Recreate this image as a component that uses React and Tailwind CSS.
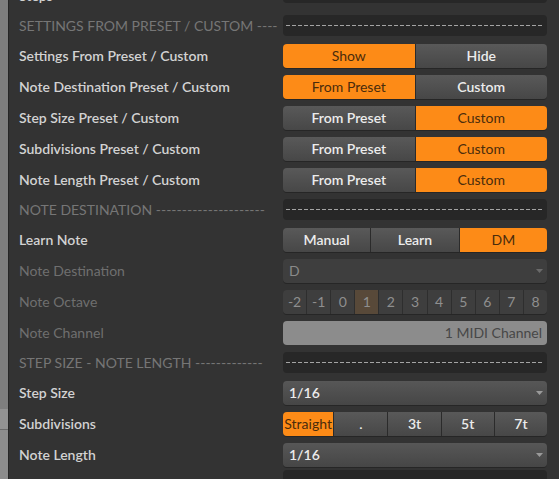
import React from 'react';

// Inspector panel from a step sequencer device

const btnGray = 'bg-gradient-to-b from-[#595959] to-[#474747] text-[#ececec] font-semibold';
const btnOrange = 'bg-[#fd8b17] text-[#4a2c0c]';

function Segmented({ items, active }) {
  return (
    <div className="flex h-[24px] w-full overflow-hidden rounded-[4px] shadow-[0_1px_0_#262626]">
      {items.map((item, i) => (
        <div
          key={item.label}
          className={`flex items-center justify-center ${i > 0 ? 'border-l border-[#2b2b2b]' : ''} ${
            i === active ? btnOrange : btnGray
          }`}
          style={{ flex: item.flex || 1 }}
        >
          {item.label}
        </div>
      ))}
    </div>
  );
}

function Dashes() {
  return (
    <div className="flex h-[21px] w-full items-center rounded-[4px] bg-[#272727] px-[3px]">
      <div className="h-px w-full bg-[repeating-linear-gradient(90deg,#a4a4a4_0_4px,transparent_4px_6px)]" />
    </div>
  );
}

function Arrow({ color }) {
  return (
    <svg width="7" height="4" viewBox="0 0 7 4" className="ml-auto">
      <path d="M0 0h7L3.5 4z" fill={color} />
    </svg>
  );
}

function Dropdown({ value, dim }) {
  return (
    <div
      className={`flex h-[24px] w-full items-center rounded-[4px] pl-[6px] pr-[4px] shadow-[0_1px_0_#262626] ${
        dim ? 'bg-[#3e3e3e] text-[#8a8a8a]' : 'bg-gradient-to-b from-[#575757] to-[#464646] text-[#ececec] font-semibold'
      }`}
    >
      <span>{value}</span>
      <Arrow color={dim ? '#6a6a6a' : '#9a9a9a'} />
    </div>
  );
}

function Octave() {
  const cells = ['-2', '-1', '0', '1', '2', '3', '4', '5', '6', '7', '8'];
  return (
    <div className="flex h-[24px] w-full overflow-hidden rounded-[4px] text-[#8f8f8f] shadow-[0_1px_0_#262626]">
      {cells.map((c, i) => (
        <div
          key={c}
          className={`flex flex-1 items-center justify-center ${i > 0 ? 'border-l border-[#2e2e2e]' : ''} ${
            c === '1' ? 'bg-[#584939]' : 'bg-[#3e3e3e]'
          }`}
        >
          {c}
        </div>
      ))}
    </div>
  );
}

function Row({ label, kind = 'bold', children }) {
  const labelCls =
    kind === 'bold'
      ? 'font-semibold text-[#d2d2d2]'
      : kind === 'head'
      ? 'text-[#767676]'
      : 'text-[#6f6f6f]';
  return (
    <div className={`flex shrink-0 items-center ${kind === 'head' ? 'h-[29px]' : 'h-[31px]'}`}>
      <div className={`w-[274px] shrink-0 pl-[10px] whitespace-nowrap overflow-hidden ${labelCls}`}>{label}</div>
      <div className="w-[264px] shrink-0">{children}</div>
    </div>
  );
}

const presetCustom = (active) => (
  <Segmented items={[{ label: 'From Preset' }, { label: 'Custom' }]} active={active} />
);

export default function App() {
  return (
    <div
      className="flex h-[479px] w-[559px] overflow-hidden bg-[#333333] text-[14px]"
      style={{ fontFamily: 'Lato, "Noto Sans", sans-serif' }}
    >
      {/* left strip */}
      <div className="flex w-[9px] shrink-0 flex-col border-r border-[#262626]">
        <div className="h-[409px] bg-[#7e7e7e]" />
        <div className="h-[21px] border-b border-[#6a6a6a] bg-[#929292]" />
        <div className="flex-1 bg-[#8c8c8c]" />
      </div>

      <div className="flex flex-1 flex-col mt-[-20px]">
        <Row label="Steps">
          <div className="h-[24px] w-full -translate-y-[5px] rounded-[4px] bg-[#272727]" />
        </Row>
        <Row label="SETTINGS FROM PRESET / CUSTOM ----" kind="head">
          <Dashes />
        </Row>
        <Row label="Settings From Preset / Custom">
          <Segmented items={[{ label: 'Show' }, { label: 'Hide' }]} active={0} />
        </Row>
        <Row label="Note Destination Preset / Custom">{presetCustom(0)}</Row>
        <Row label="Step Size Preset / Custom">{presetCustom(1)}</Row>
        <Row label="Subdivisions Preset / Custom">{presetCustom(1)}</Row>
        <Row label="Note Length Preset / Custom">{presetCustom(1)}</Row>
        <Row label="NOTE DESTINATION ---------------------" kind="head">
          <Dashes />
        </Row>
        <Row label="Learn Note">
          <Segmented items={[{ label: 'Manual' }, { label: 'Learn' }, { label: 'DM' }]} active={2} />
        </Row>
        <Row label="Note Destination" kind="dim">
          <Dropdown value="D" dim />
        </Row>
        <Row label="Note Octave" kind="dim">
          <Octave />
        </Row>
        <Row label="Note Channel" kind="dim">
          <div className="flex h-[24px] w-full items-center justify-end rounded-[4px] bg-[#8c8c8c] pr-[5px] text-[#474747]">
            1 MIDI Channel
          </div>
        </Row>
        <Row label="STEP SIZE - NOTE LENGTH -------------" kind="head">
          <Dashes />
        </Row>
        <Row label="Step Size">
          <Dropdown value="1/16" />
        </Row>
        <Row label="Subdivisions">
          <Segmented
            items={[
              { label: 'Straight', flex: 51 },
              { label: '.', flex: 54 },
              { label: '3t', flex: 53 },
              { label: '5t', flex: 53 },
              { label: '7t', flex: 53 },
            ]}
            active={0}
          />
        </Row>
        <Row label="Note Length">
          <Dropdown value="1/16" />
        </Row>
        <div className="flex shrink-0 pl-[274px]">
          <div className="h-[21px] w-[264px] rounded-[4px] bg-[#272727]" />
        </div>
      </div>
    </div>
  );
}
